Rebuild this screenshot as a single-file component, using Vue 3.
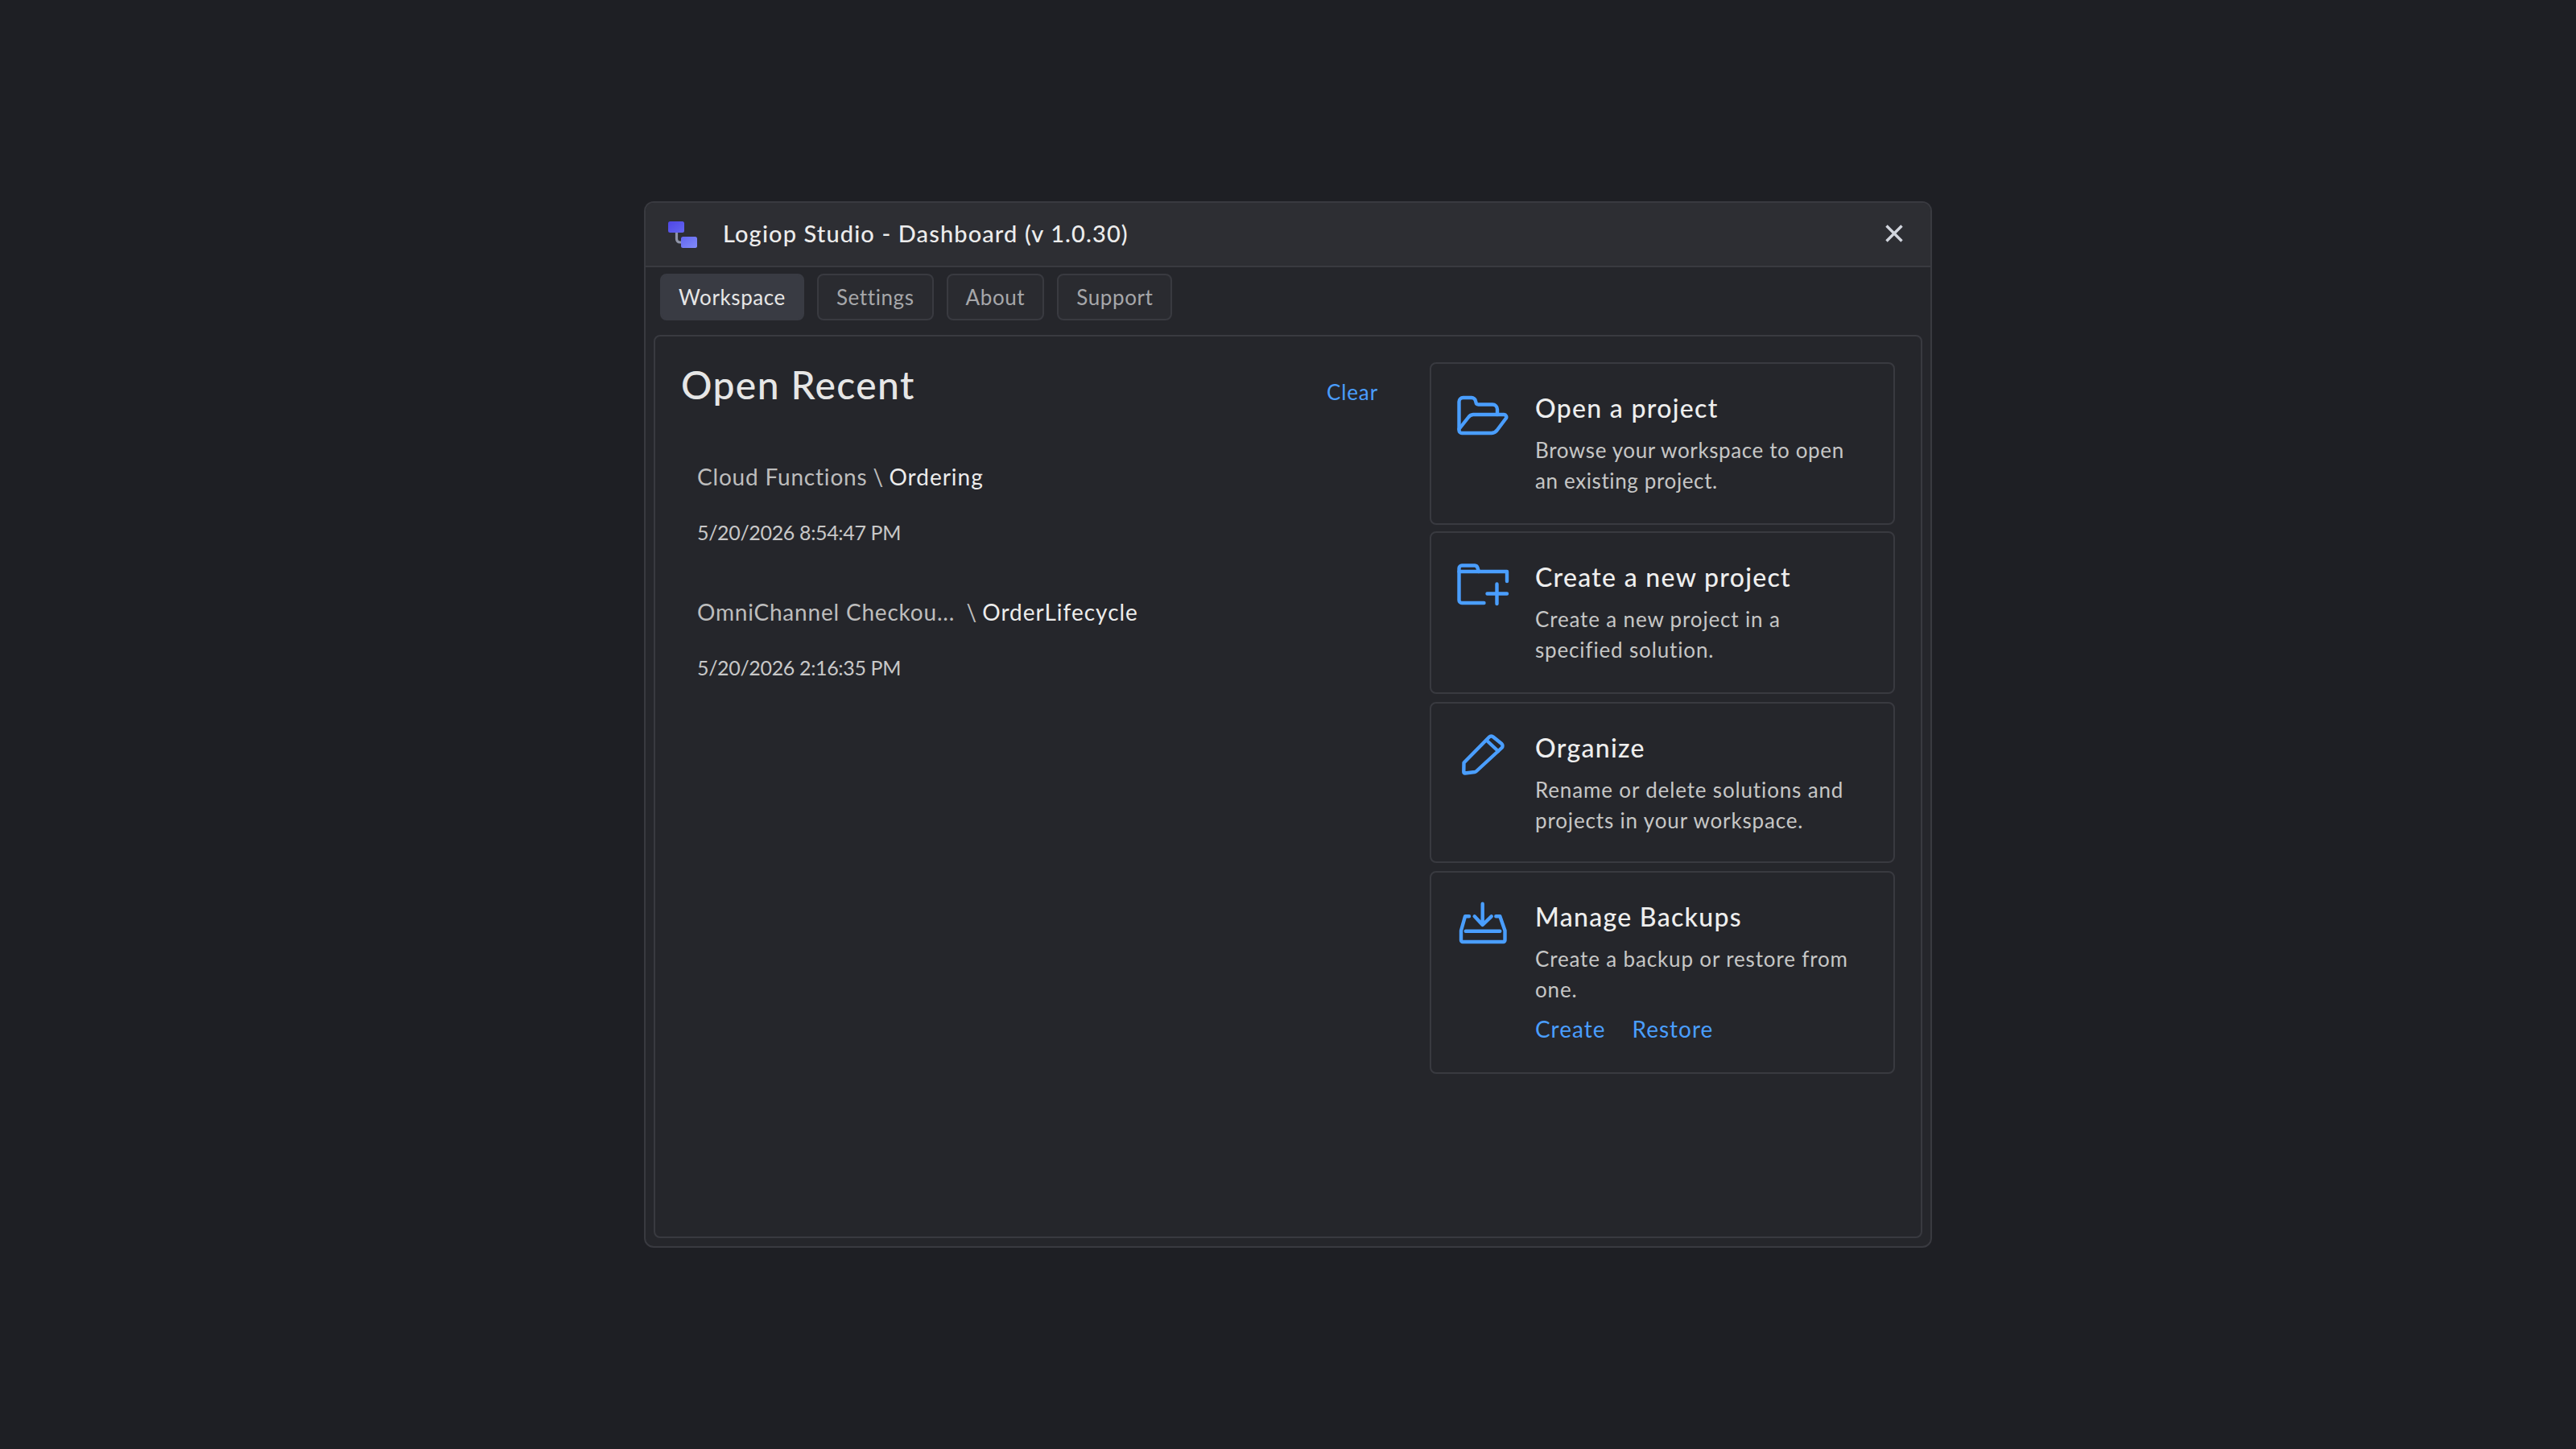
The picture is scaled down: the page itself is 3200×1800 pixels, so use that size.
<script setup>
const tabs = ['Workspace', 'Settings', 'About', 'Support']
const recents = [
  { folder: 'Cloud Functions', sep: ' \\ ', name: 'Ordering', date: '5/20/2026 8:54:47 PM' },
  { folder: 'OmniChannel Checkou...', sep: '  \\ ', name: 'OrderLifecycle', date: '5/20/2026 2:16:35 PM' }
]
</script>

<template>
  <div class="page">
    <div class="window">
      <header class="titlebar">
        <svg class="logo" width="36" height="33" viewBox="830 275 36 33" fill="none">
          <defs>
            <linearGradient id="lg1" x1="0" y1="0" x2="1" y2="1"><stop offset="0" stop-color="#4f46e5"/><stop offset="1" stop-color="#6366f1"/></linearGradient>
            <linearGradient id="lg2" x1="0" y1="0" x2="1" y2="1"><stop offset="0" stop-color="#6366f1"/><stop offset="1" stop-color="#818cf8"/></linearGradient>
          </defs>
          <path d="M840.5 288 V297 a4 4 0 0 0 4 4 H848" stroke="#8f94a8" stroke-width="3.2"/>
          <rect x="830" y="275" width="20" height="14" rx="2.5" fill="url(#lg1)"/>
          <rect x="846" y="294" width="20" height="14" rx="2.5" fill="url(#lg2)"/>
        </svg>
        <span class="app-title">Logiop Studio - Dashboard (v 1.0.30)</span>
        <svg class="close" width="22" height="22" viewBox="0 0 22 22" fill="none" stroke="#d2d6de" stroke-width="3.4">
          <path d="M1.5 1.5 L20.5 20.5 M20.5 1.5 L1.5 20.5"/>
        </svg>
      </header>

      <nav class="tabs">
        <button v-for="(t, i) in tabs" :key="t" class="tab" :class="{ active: i === 0 }">{{ t }}</button>
      </nav>

      <main class="panel">
        <section class="recent">
          <div class="recent-head">
            <h1 class="recent-title">Open Recent</h1>
            <a class="clear">Clear</a>
          </div>
          <ul class="recent-list">
            <li v-for="r in recents" :key="r.date" class="recent-item">
              <div class="recent-path"><span class="folder">{{ r.folder }}</span><span class="sep">{{ r.sep }}</span><span class="leaf">{{ r.name }}</span></div>
              <div class="recent-date">{{ r.date }}</div>
            </li>
          </ul>
        </section>

        <aside class="actions">
          <article class="card">
            <svg class="icon" width="90" height="70" viewBox="0 0 90 70">
              <path d="M12.5 53 V19 a5 5 0 0 1 5-5 H28 a5 5 0 0 1 5 4 l.5 2 a3 3 0 0 0 3 2.5 H54 a6 6 0 0 1 6 6 V35"/>
              <path d="M12.5 53 L24 38.5 a8 8 0 0 1 6-3.5 H68 a3 3 0 0 1 2.5 5 L60 54 a9 9 0 0 1-7 4 H16 a3.5 3.5 0 0 1-3.5-3.5 V53"/>
            </svg>
            <div class="card-body">
              <h2 class="card-title">Open a project</h2>
              <p class="card-text text-tight">Browse your workspace to open<br>an existing project.</p>
            </div>
          </article>

          <article class="card card-near">
            <svg class="icon" width="90" height="70" viewBox="0 0 90 70">
              <path d="M43.5 59 H16 a3.5 3.5 0 0 1-3.5-3.5 V16 a3.5 3.5 0 0 1 3.5-3.5 H32 a4 4 0 0 1 3.5 3 L37 20 H72 V32"/>
              <path d="M12.5 20 H37"/>
              <path d="M47.5 47.5 H72 M59.5 35.5 V60"/>
            </svg>
            <div class="card-body">
              <h2 class="card-title">Create a new project</h2>
              <p class="card-text">Create a new project in a<br>specified solution.</p>
            </div>
          </article>

          <article class="card card-short">
            <svg class="icon" width="90" height="70" viewBox="0 2 90 70">
              <path d="M18.5 47.5 L50 15.5 a3.5 3.5 0 0 1 5 0 L65.5 24 a3.5 3.5 0 0 1 0 5 L34 58 a4 4 0 0 1-2 1 L20 60.5 a1.5 1.5 0 0 1-1.7-1.7 Z"/>
              <path d="M46.5 19.5 L61 33"/>
            </svg>
            <div class="card-body">
              <h2 class="card-title">Organize</h2>
              <p class="card-text">Rename or delete solutions and<br>projects in your workspace.</p>
            </div>
          </article>

          <article class="card">
            <svg class="icon" width="90" height="70" viewBox="0 2 90 70">
              <path d="M41.7 12.7 V38 M31.7 28.3 L41.7 39 L52.7 28.3"/>
              <path d="M25 28.3 H20 L15 46 V58 a2 2 0 0 0 2 2 H67.5 a2 2 0 0 0 2-2 V46 L63.3 28.3 H58.3"/>
              <path d="M20.7 46.7 H63.3"/>
            </svg>
            <div class="card-body">
              <h2 class="card-title">Manage Backups</h2>
              <p class="card-text">Create a backup or restore from<br>one.</p>
              <div class="links"><a class="link">Create</a><a class="link">Restore</a></div>
            </div>
          </article>
        </aside>
      </main>
    </div>
  </div>
</template>

<style>
body { margin: 0; background: #1e1f24; }
</style>

<style scoped>
.page {
  width: 3200px;
  height: 1800px;
  display: flex;
  align-items: center;
  justify-content: center;
  background: #1e1f24;
  font-family: "Lato", "Noto Sans", sans-serif;
}
.window {
  width: 1600px;
  height: 1300px;
  box-sizing: border-box;
  display: flex;
  flex-direction: column;
  background: #25262b;
  border: 2px solid #393a40;
  border-radius: 12px;
  overflow: hidden;
}
.titlebar {
  height: 80px;
  flex: none;
  box-sizing: border-box;
  display: flex;
  align-items: center;
  padding: 0 34px 0 28px;
  background: #2d2e33;
  border-bottom: 2px solid #393a40;
}
.logo { flex: none; margin-right: 32px; }
.app-title {
  flex: 1;
  padding-bottom: 4px;
  font-size: 29px;
  font-weight: 500;
  color: #ececec;
  letter-spacing: 1.12px;
}
.close { flex: none; margin-bottom: 2px; }
.tabs {
  display: flex;
  gap: 16px;
  padding: 8px 18px 18px;
  flex: none;
}
.tab {
  height: 58px;
  box-sizing: border-box;
  padding: 0 22px;
  font: inherit;
  font-size: 26px;
  letter-spacing: 0.6px;
  color: #a6a7aa;
  background: #2a2b30;
  border: 2px solid #393a40;
  border-radius: 8px;
}
.tab.active {
  padding: 0 21px;
  color: #e6e6e6;
  background: #393b43;
  border-color: #393b43;
}
.panel {
  flex: 1;
  min-height: 0;
  margin: 0 10px 10px;
  box-sizing: border-box;
  display: flex;
  gap: 64px;
  padding: 32px;
  border: 2px solid #393a40;
  border-radius: 8px;
}
.recent { flex: 1; min-width: 0; }
.recent-head {
  display: flex;
  justify-content: space-between;
  align-items: flex-start;
}
.recent-title {
  margin: 0;
  font-size: 48px;
  line-height: 56px;
  font-weight: 500;
  color: #e6e6e6;
  letter-spacing: 1.4px;
}
.clear {
  margin-top: 19px;
  font-size: 26px;
  line-height: 36px;
  color: #4a9eff;
  letter-spacing: 0.9px;
}
.recent-list {
  list-style: none;
  margin: 66px 0 0;
  padding: 0 0 0 20px;
}
.recent-item { height: 168px; }
.recent-path {
  font-size: 28px;
  line-height: 40px;
  white-space: pre;
  letter-spacing: 0.8px;
}
.folder { color: #bdbdbd; }
.sep { color: #bdbdbd; letter-spacing: 0; }
.leaf { color: #ececec; letter-spacing: 1px; }
.recent-date {
  margin-top: 29px;
  font-size: 25px;
  line-height: 40px;
  letter-spacing: -0.35px;
  color: #c8c8c8;
}
.actions {
  flex: none;
  width: 578px;
}
.card {
  box-sizing: border-box;
  display: flex;
  gap: 17px;
  padding: 28px 22px 34px;
  border: 2px solid #393a40;
  border-radius: 8px;
}
.card + .card { margin-top: 10px; }
.card.card-near { margin-top: 8px; }
.card.card-short { padding-bottom: 32px; }
.icon {
  flex: none;
  fill: none;
  stroke: #4a9eff;
  stroke-width: 4.4;
  stroke-linecap: round;
  stroke-linejoin: round;
}
.card-body { padding-top: 7px; min-width: 0; }
.card-title {
  margin: 0;
  font-size: 32px;
  line-height: 40px;
  font-weight: 500;
  color: #eeeeee;
  letter-spacing: 1.3px;
}
.card-text {
  margin: 13px 0 0;
  font-size: 26px;
  line-height: 38px;
  color: #c6c6c6;
  letter-spacing: 0.85px;
  white-space: nowrap;
}
.card-text.text-tight { letter-spacing: 0.62px; }
.links {
  display: flex;
  gap: 33px;
  margin-top: 10px;
  line-height: 40px;
}
.link {
  font-size: 28px;
  color: #4a9eff;
  letter-spacing: 1px;
}
</style>
